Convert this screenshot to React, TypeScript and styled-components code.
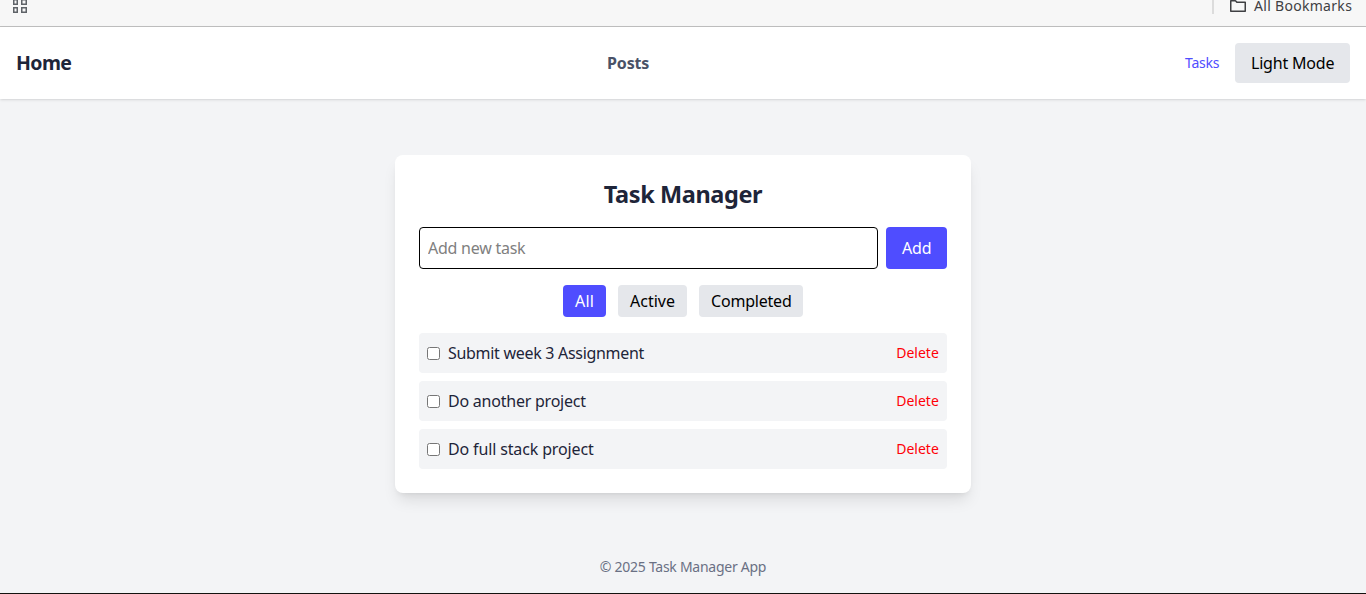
import React, { useState } from 'react';
import styled, { createGlobalStyle } from 'styled-components';

const GlobalStyle = createGlobalStyle`
  *, *::before, *::after { box-sizing: border-box; }
  body {
    margin: 0;
    background: #f3f4f6;
    color: #1e2539;
    font-family: "Noto Sans", "Open Sans", sans-serif;
    font-size: 16px;
    line-height: 24px;
  }
  h1, p, ul { margin: 0; padding: 0; }
  button { font: inherit; border: 0; padding: 0; cursor: pointer; }
`;

const Page = styled.div`
  height: 594px;
  display: flex;
  flex-direction: column;
  overflow: hidden;
  border-bottom: 1px solid #14120f;
`;

const BookmarksBar = styled.div`
  flex: none;
  height: 27px;
  display: flex;
  justify-content: space-between;
  align-items: flex-start;
  padding: 0 14px 0 12px;
  background: #f7f7f7;
  border-bottom: 1px solid #c0c0c0;
`;

const BookmarksRight = styled.div`
  display: flex;
  align-items: flex-start;
`;

const Divider = styled.span`
  width: 2px;
  height: 14px;
  margin-right: 16px;
  background: #dcdcdc;
`;

const Label = styled.span<{ $tracking?: number; $width?: number }>`
  display: inline-block;
  white-space: nowrap;
  letter-spacing: ${p => p.$tracking ?? 0}px;
  width: ${p => (p.$width ? `${p.$width}px` : 'auto')};
`;

const BookmarksText = styled.span`
  display: flex;
  width: 98px;
  margin-left: 8px;
  font-size: 14px;
  line-height: 12px;
  color: #3f4043;
`;

const Nav = styled.nav`
  flex: none;
  height: 72px;
  display: flex;
  justify-content: space-between;
  align-items: center;
  padding: 16px;
  background: #fff;
  box-shadow: 0 1px 3px rgba(0, 0, 0, 0.1), 0 1px 2px -1px rgba(0, 0, 0, 0.1);
`;

const Brand = styled.a`
  font-size: 19.5px;
  font-weight: 700;
  line-height: 28px;
`;

const NavLink = styled.a`
  font-weight: 700;
  color: #4a5267;
`;

const NavActions = styled.div`
  display: flex;
  align-items: center;
  gap: 16px;
`;

const SmallLink = styled.a`
  font-size: 14px;
  line-height: 20px;
  color: #4f4dff;
`;

const Button = styled.button<{ $primary?: boolean; $pad: string }>`
  padding: ${p => p.$pad};
  border-radius: 4px;
  background: ${p => (p.$primary ? '#4f4dff' : '#e5e7eb')};
  color: ${p => (p.$primary ? '#fff' : '#000')};
`;

const Main = styled.main`
  flex: 1;
  display: flex;
  flex-direction: column;
  align-items: center;
  padding-top: 56px;
`;

const Card = styled.section`
  width: 576px;
  padding: 24px;
  background: #fff;
  border-radius: 8px;
  box-shadow: 0 10px 15px -3px rgba(0, 0, 0, 0.1), 0 4px 6px -4px rgba(0, 0, 0, 0.1);
`;

const Title = styled.h1`
  margin-bottom: 18px;
  text-align: center;
  font-size: 23.5px;
  font-weight: 700;
  line-height: 30px;
`;

const AddRow = styled.form`
  display: flex;
  gap: 8px;
  margin-bottom: 16px;
`;

const TaskInput = styled.input`
  flex: 1;
  min-width: 0;
  height: 42px;
  padding: 8px;
  border: 1px solid #000;
  border-radius: 4px;
  background: #fff;
  font: inherit;
  outline: none;
  letter-spacing: -0.25px;
  &::placeholder { color: #808080; opacity: 1; }
`;

const Filters = styled.div`
  display: flex;
  justify-content: center;
  gap: 12px;
  margin-bottom: 16px;
`;

const TaskList = styled.ul`
  display: flex;
  flex-direction: column;
  gap: 8px;
  list-style: none;
`;

const TaskRow = styled.li`
  display: flex;
  justify-content: space-between;
  align-items: center;
  height: 40px;
  padding: 8px;
  border-radius: 4px;
  background: #f3f4f6;
`;

const TaskLabel = styled.label`
  display: flex;
  align-items: center;
  gap: 8px;
`;

const Checkbox = styled.input`
  width: 13px;
  height: 13px;
  margin: 0;
`;

const DeleteButton = styled.button`
  background: none;
  font-size: 14px;
  line-height: 20px;
  color: #ff0008;
`;

const Footer = styled.footer`
  padding-bottom: 16px;
  text-align: center;
  font-size: 14px;
  line-height: 20px;
  color: #6a7084;
`;

const filters = [
  { name: 'All', width: 19, tracking: 0.2 },
  { name: 'Active', width: 45, tracking: 0 },
  { name: 'Completed', width: 80, tracking: -0.2 },
];

const tasks = [
  { name: 'Submit week 3 Assignment', tracking: -0.3 },
  { name: 'Do another project', tracking: -0.23 },
  { name: 'Do full stack project', tracking: -0.14 },
];

export default function App() {
  const [filter, setFilter] = useState('All');
  return (
    <Page>
      <GlobalStyle />
      <BookmarksBar>
        <svg width="16" height="14" viewBox="0 0 16 14" fill="none" stroke="#5f6368" strokeWidth="1.5">
          <path d="M1.75 -.25h3.5v4.5h-3.5zM9.75 -.25h4.5v4.5h-4.5zM1.75 7.75h3.5v4.5h-3.5zM9.75 7.75h4.5v4.5h-4.5z" />
        </svg>
        <BookmarksRight>
          <Divider />
          <svg width="16" height="14" viewBox="0 0 16 14" fill="none" stroke="#3f4043" strokeWidth="1.5">
            <path d="M.75 .75h4.7l1.6 1.6h8.2v8.9h-14.5z" strokeLinejoin="round" />
          </svg>
          <BookmarksText><Label $tracking={0.3}>All Bookmarks</Label></BookmarksText>
        </BookmarksRight>
      </BookmarksBar>
      <Nav>
        <Brand><Label $width={55} $tracking={-0.6}>Home</Label></Brand>
        <NavLink><Label $width={42} $tracking={-0.15}>Posts</Label></NavLink>
        <NavActions>
          <SmallLink><Label $width={34} $tracking={-0.25}>Tasks</Label></SmallLink>
          <Button $pad="8px 16px"><Label $width={83} $tracking={-0.2}>Light Mode</Label></Button>
        </NavActions>
      </Nav>
      <Main>
        <Card>
          <Title><Label $tracking={-0.4}>Task Manager</Label></Title>
          <AddRow onSubmit={e => e.preventDefault()}>
            <TaskInput placeholder="Add new task" />
            <Button $primary $pad="8px 16px"><Label $width={29} $tracking={-0.2}>Add</Label></Button>
          </AddRow>
          <Filters>
            {filters.map(f => (
              <Button key={f.name} $primary={f.name === filter} $pad="4px 12px" onClick={() => setFilter(f.name)}>
                <Label $width={f.width} $tracking={f.tracking}>{f.name}</Label>
              </Button>
            ))}
          </Filters>
          <TaskList>
            {tasks.map(t => (
              <TaskRow key={t.name}>
                <TaskLabel>
                  <Checkbox type="checkbox" />
                  <Label $tracking={t.tracking}>{t.name}</Label>
                </TaskLabel>
                <DeleteButton><Label $width={43}>Delete</Label></DeleteButton>
              </TaskRow>
            ))}
          </TaskList>
        </Card>
      </Main>
      <Footer><Label $tracking={-0.26}>© 2025 Task Manager App</Label></Footer>
    </Page>
  );
}
